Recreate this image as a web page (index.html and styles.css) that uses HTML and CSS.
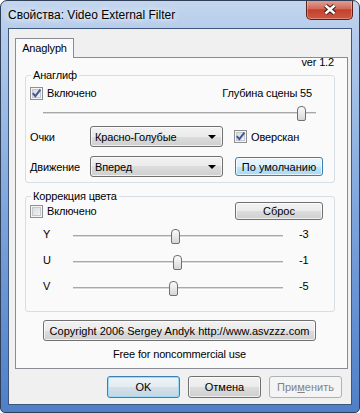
FILE: index.html
```html
<!DOCTYPE html>
<html lang="ru">
<head>
  <meta charset="UTF-8">
  <title>Свойства: Video External Filter</title>
  <link rel="stylesheet" href="styles.css">
</head>
<body>
  <div class="window">
    <div class="titlebar">
      <span class="title">Свойства: Video External Filter</span>
      <div class="close">
        <svg width="14" height="11" viewBox="0 0 14 11">
          <path d="M2.5 1.5 L11.5 9.5 M11.5 1.5 L2.5 9.5" stroke="#3b1812" stroke-width="4.4"/>
          <path d="M2.5 1.5 L11.5 9.5 M11.5 1.5 L2.5 9.5" stroke="#fff" stroke-width="2.4"/>
        </svg>
      </div>
    </div>

    <div class="client">
      <div class="tabs">
        <div class="tab">Anaglyph</div>
      </div>

      <div class="tabpage">
        <div class="ver">ver 1.2</div>

        <fieldset class="group g-anaglyph">
          <legend>Анаглиф</legend>
          <div class="row row-enable">
            <label class="check">
              <span class="box"><svg width="11" height="11" viewBox="0 0 11 11"><path d="M1.8 5.2 L4.3 8.2 L9.4 1.6" fill="none" stroke="#40589c" stroke-width="2"/></svg></span>
              Включено
            </label>
            <span class="depth">Глубина сцены 55</span>
          </div>
          <div class="slider depth-slider">
            <div class="track"></div>
            <div class="thumb" style="left: 254px"></div>
          </div>
          <div class="row row-combo">
            <span class="lbl">Очки</span>
            <div class="combo">Красно-Голубые<span class="arrow"></span></div>
            <label class="check overscan">
              <span class="box"><svg width="11" height="11" viewBox="0 0 11 11"><path d="M1.8 5.2 L4.3 8.2 L9.4 1.6" fill="none" stroke="#40589c" stroke-width="2"/></svg></span>
              Оверскан
            </label>
          </div>
          <div class="row row-combo row-motion">
            <span class="lbl">Движение</span>
            <div class="combo">Вперед<span class="arrow"></span></div>
            <button class="btn btn-hot btn-side">По умолчанию</button>
          </div>
        </fieldset>

        <fieldset class="group g-color">
          <legend>Коррекция цвета</legend>
          <div class="row row-reset">
            <label class="check">
              <span class="box"></span>
              Включено
            </label>
            <button class="btn btn-reset">Сброс</button>
          </div>
          <div class="srow first">
            <span class="axis">Y</span>
            <div class="slider">
              <div class="track"></div>
              <div class="thumb" style="left: 98px"></div>
            </div>
            <span class="val">-3</span>
          </div>
          <div class="srow">
            <span class="axis">U</span>
            <div class="slider">
              <div class="track"></div>
              <div class="thumb" style="left: 100px"></div>
            </div>
            <span class="val">-1</span>
          </div>
          <div class="srow">
            <span class="axis">V</span>
            <div class="slider">
              <div class="track"></div>
              <div class="thumb" style="left: 96px"></div>
            </div>
            <span class="val">-5</span>
          </div>
        </fieldset>

        <button class="btn copyright">Copyright 2006 Sergey Andyk http://www.asvzzz.com</button>
        <div class="free">Free for noncommercial use</div>
      </div>

      <div class="buttons">
        <button class="btn btn-default">OK</button>
        <button class="btn">Отмена</button>
        <button class="btn" disabled>При<u>м</u>енить</button>
      </div>
    </div>
  </div>
</body>
</html>
```

FILE: styles.css
```css
* {
  box-sizing: border-box;
}
body {
  margin: 0;
  font-family: "Liberation Sans", Arial, sans-serif;
  font-size: 11px;
  letter-spacing: -0.15px;
  color: #000;
}
.window {
  width: 360px;
  height: 413px;
  border: 1px solid #2f3f58;
  border-radius: 7px 7px 5px 5px;
  background: linear-gradient(180deg, #c3d6ee 0%, #b4cbea 8%, #9ebde5 25%, #7aa1da 55%, #5b8ace 85%, #4f80c7 100%);
  display: flex;
  flex-direction: column;
  overflow: hidden;
}
.titlebar {
  height: 27px;
  flex: none;
  display: flex;
  align-items: center;
  padding: 0 6px 0 7px;
}
.title {
  font-size: 12px;
  letter-spacing: 0;
  text-shadow: 0 0 6px #fff, 0 0 10px rgba(255, 255, 255, 0.8);
}
.close {
  margin-left: auto;
  align-self: flex-start;
  margin-top: -1px;
  width: 47px;
  height: 20px;
  border: 1px solid #5e2119;
  border-top: none;
  border-radius: 0 0 5px 5px;
  background: linear-gradient(180deg, #e3a497 0%, #d16b5b 45%, #c2412e 52%, #d0583f 100%);
  box-shadow: inset 0 0 0 1px rgba(255, 255, 255, 0.3);
  display: flex;
  align-items: center;
  justify-content: center;
}

.client {
  flex: 1;
  margin: 0 7px 7px;
  background: #f0f0f0;
  border: 1px solid #3f567b;
  padding: 9px 3px 6px 6px;
  display: flex;
  flex-direction: column;
}
.tabs {
  display: flex;
  height: 20px;
  margin-bottom: -1px;
  position: relative;
  z-index: 1;
}
.tab {
  width: 59px;
  height: 20px;
  border: 1px solid #898c95;
  border-bottom: none;
  background: #fafafa;
  line-height: 18px;
  text-align: center;
}
.tabpage {
  height: 312px;
  border: 1px solid #898c95;
  background: #fafafa;
}
.ver {
  line-height: 12px;
  margin-top: -2px;
  padding-right: 13px;
  text-align: right;
}

/* group boxes */
.group {
  margin: 1px 12px 0 9px;
  padding: 0 0 5px 4px;
  border: 1px solid #d5dfe5;
  border-radius: 3px;
  min-width: 0;
}
.group legend {
  padding: 0 2px;
  margin-left: 1px;
  line-height: 13px;
}
.g-color {
  margin-top: 7px;
  padding-bottom: 15px;
}

.row {
  display: flex;
  align-items: center;
}
.row-enable {
  height: 16px;
  margin-top: 3px;
}
.depth {
  margin-left: auto;
  margin-right: 22px;
}
.row-combo {
  height: 21px;
  margin-top: 3px;
}
.row-motion {
  margin-top: 9px;
}
.lbl {
  width: 60px;
}
.row-reset {
  height: 18px;
  margin-top: -1px;
  justify-content: space-between;
  padding-right: 11px;
}

/* checkbox */
.check {
  display: flex;
  align-items: center;
  gap: 4px;
}
.box {
  width: 13px;
  height: 13px;
  flex: none;
  border: 1px solid #8e8f8f;
  background: linear-gradient(135deg, #d3d6da, #f8f8f8);
  box-shadow: inset 0 0 0 1px #f4f4f4, inset 0 0 0 2px #c4c8cc;
  display: flex;
  align-items: center;
  justify-content: center;
}
.overscan {
  margin-left: 11px;
}

/* combo */
.combo {
  width: 133px;
  height: 21px;
  border: 1px solid #707070;
  border-radius: 3px;
  background: linear-gradient(180deg, #f2f2f2 0%, #ebebeb 50%, #dddddd 50%, #cfcfcf 100%);
  box-shadow: inset 0 0 0 1px rgba(255, 255, 255, 0.7);
  display: flex;
  align-items: center;
  padding: 0 6px 0 4px;
}
.arrow {
  margin-left: auto;
  width: 0;
  height: 0;
  border-left: 4px solid transparent;
  border-right: 4px solid transparent;
  border-top: 4px solid #000;
}

/* buttons */
.btn {
  font: inherit;
  color: #000;
  padding: 0;
  border: 1px solid #707070;
  border-radius: 3px;
  background: linear-gradient(180deg, #f2f2f2 0%, #ebebeb 50%, #dddddd 50%, #cfcfcf 100%);
  box-shadow: inset 0 0 0 1px rgba(255, 255, 255, 0.7);
}
.btn-hot {
  border-color: #3c7fb1;
  background: linear-gradient(180deg, #eaf6fd 0%, #d9f0fc 50%, #bee6fd 50%, #a7d9f5 100%);
}
.btn-side {
  width: 88px;
  height: 19px;
  margin-left: 12px;
}
.btn-reset {
  width: 88px;
  height: 18px;
}
.btn-default {
  border-color: #3c7fb1;
  background: linear-gradient(180deg, #eef4f8 0%, #e4ecf1 50%, #d4e0e8 50%, #c6d6e1 100%);
  box-shadow: inset 0 0 0 1px #9fdaf7;
}
.btn:disabled {
  color: #838383;
  border-color: #adb2b5;
  background: #f4f4f4;
  box-shadow: none;
}
.copyright {
  display: block;
  width: 273px;
  height: 21px;
  margin: 8px 0 0 27px;
}
.free {
  width: 273px;
  margin: 7px 0 0 27px;
  line-height: 13px;
  text-align: center;
}
.buttons {
  display: flex;
  justify-content: flex-end;
  gap: 8px;
  margin-top: 7px;
  padding-right: 6px;
}
.buttons .btn {
  width: 73px;
  height: 22px;
}

/* trackbars */
.slider {
  position: relative;
  width: 273px;
  height: 20px;
  margin: 2px 0 0 13px;
  padding-top: 9px;
}
.track {
  height: 3px;
  border-top: 1px solid #a9a9a9;
  border-bottom: 1px solid #fff;
  background: #d8d8d8;
}
.thumb {
  position: absolute;
  top: 3px;
  width: 9px;
  height: 15px;
  border: 1px solid #707070;
  border-radius: 4px 4px 2px 2px;
  background: linear-gradient(180deg, #fbfbfb 0%, #e9e9e9 50%, #d6d6d6 100%);
}
.srow {
  display: flex;
  height: 15px;
  margin-top: 11px;
}
.srow.first {
  margin-top: 9px;
}
.axis {
  width: 30px;
  margin-left: 13px;
  line-height: 11px;
}
.srow .slider {
  width: 210px;
  height: 15px;
  margin: 0;
  padding-top: 6px;
}
.srow .thumb {
  top: 0;
}
.val {
  margin-left: 16px;
  line-height: 11px;
}
```
